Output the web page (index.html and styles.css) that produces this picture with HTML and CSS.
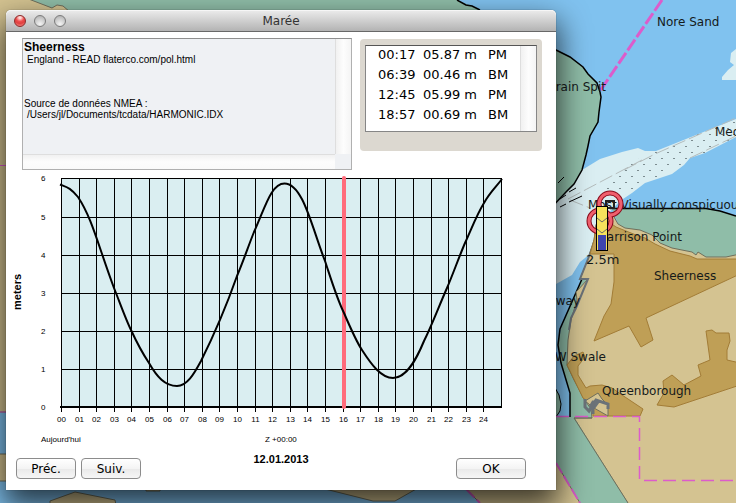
FILE: index.html
```html
<!DOCTYPE html>
<html lang="fr">
<head>
    <meta charset="UTF-8">
    <meta name="viewport" content="width=device-width, initial-scale=1.0">
    <title>Marée</title>
    <link rel="stylesheet" href="styles.css">
</head>
<body>
    <svg class="map" viewBox="0 0 736 503" preserveAspectRatio="xMinYMin slice">
        <defs>
            <pattern id="sand" width="12" height="12" patternUnits="userSpaceOnUse">
                <path d="M1 2.5h2M7 8.5h2" stroke="#7c8c90"/>
            </pattern>
        </defs>
        <rect class="water" width="736" height="503"/>

        <!-- west bank -->
        <path class="green" d="M0 0H457L480 10V60H0z"/>
        <path class="coast" d="M457 0L466 5L472 6L480 10"/>
        <path class="land edge" d="M-2 -2H26L52 8L57 5L63 6L70 12V412H-2z"/>
        <path class="land edge" d="M-2 454H10V481H-2z"/>
        <path class="limit" d="M0 165.5H8M0 412H8"/>
        <path class="land edge" d="M50 505V501L75 492L115 500L116 505z"/>
        <path class="land edge" d="M146 480H160V491H146z"/>
        <path class="land edge" d="M325 489L373 501H395L418 488z"/>

        <!-- drying banks -->
        <path class="shoal" d="M550 205L582 170L600 159L622 152L638 148L645 151H656L736 119V137L705 153L690 158L684 165L672 174L645 183L632 193L620 201L600 222L594 240L590 254L580 262L572 275L556 284H550z"/>
        <path class="shoal" d="M736 49L731 53L730 62L734 65L728 70L722 77V80H736z"/>
        <path d="M624 166L655 151L736 119V137L705 153L684 163L660 176L610 202L590 196z" fill="url(#sand)"/>
        <path class="bank" d="M568 199L642 160M624 170L655 154L736 118M570 200L590 208M690 158L736 136"/>
        <path class="green" d="M550 47L570 57L583 67L588 74L597 83L600 92L601 97L599 112L598 122L590 136L588 146L586 155L582 170L574 184L566 192L550 209z"/>
        <path class="coast" d="M550 47L570 57L583 67L588 74L597 83L600 92L601 97L599 112L598 122L590 136L588 146L586 155L582 170L574 184L566 192L550 209"/>
        <path class="hatch" d="M558 183L564 177M560 199L566 195M569 192L576 188M560 207L566 204M569 202L582 196"/>

        <!-- Sheppey -->
        <path class="green" d="M612 208.500H706L720 211L736 216V260H690L620 228z"/>
        <path class="coast" d="M610 208.500H706L720 211L736 216"/>
        <path class="green" d="M588 278H582L561 329L558 345L561 363L570 393V417H556V463L580 503H640V400L600 300z"/>
        <path class="water" d="M556 340L558 345L561 363L570 393V417H556z"/>
        <path class="coast" d="M582 279L560 329L558 345L561 363L570 393V417"/>
        <path class="green coastline" d="M554 386L559 395L561 404L560 411L556 417"/>
        <path class="land edge" d="M602 212L613 215L618 224L625 228L640 230L652 235L660 243L672 248L692 252L696 255L698 252L706 257L726 257L740 254V505H629L574 418H592L591 409L584 399L574 380L567 365L568 340L571 320L577 300L576 292L588 279H580L588 259L594 240L596 225z"/>
        <path class="green" d="M556 417H574L628 503H579L556 463z"/>
        <path class="edge" d="M592 418H574L628 503"/>
        <path class="land" d="M456 480L480 503H580L556 463z"/>
        <path class="edge" d="M466 489L480 503M556 463L580 503"/>
        <path class="limit thick" d="M466 489L480 503M556 463L580 503"/>
        <path class="shore" d="M597 225L595 240L588 259L580 279H588L583 291L576 308L571 318L569 330"/>

        <!-- built-up areas -->
        <path class="town edge" d="M598 214L609 222L616 227L636 235L645 238L655 244L670 251L690 256L697 259H740V274L646 318L653 340L641 347L629 326L594 341L600 326L604 316L611 304L614 282V254H590L594 240z"/>
        <path class="town edge" d="M567 365L574 356L583 352L585 357L578 366V375L586 388L590 386L602 385L612 388L622 395L643 409L640 416H593V405L583 398z"/>
        <path class="land edge" d="M585 401L598 393L602 399L608 405V416L594 408z"/>
        <path class="harbour" d="M585 399V407L589 411L596 400L608 404V409M590 407L593 402L598 402L593 409V414"/>
        <path class="town edge" d="M706 331L710 360L698 365L701 376L684 385L672 375L663 381L664 393L657 405L674 407L740 385V363L727 360V350L730 341L729 333H716L712 330z"/>

        <path class="limit channel" d="M662 0L600 91"/>
        <path class="limit area" d="M556 416.500H639.500V480.500H736"/>

        <g class="names">
            <text x="657" y="26">Nore Sand</text>
            <text x="606" y="91" text-anchor="end">rain Spit</text>
            <text x="715" y="136">Med</text>
            <text x="588" y="209">Most Visually conspicuou</text>
            <text x="682" y="241" text-anchor="end">Harrison Point</text>
            <text x="654" y="280">Sheerness</text>
            <text x="580" y="305" text-anchor="end">way</text>
            <text x="606" y="361" text-anchor="end">W Swale</text>
            <text x="602" y="395">Queenborough</text>
        </g>

        <!-- tide gauge -->
        <g fill="none">
            <rect x="606" y="201" width="8" height="7" stroke="#222" stroke-width="2"/>
            <circle cx="610" cy="204" r="11" stroke="#8a0c1c" stroke-width="5"/>
            <circle cx="600" cy="221" r="11" stroke="#8a0c1c" stroke-width="5"/>
            <circle cx="610" cy="204" r="11" stroke="#f0606e" stroke-width="3"/>
            <circle cx="600" cy="221" r="11" stroke="#f0606e" stroke-width="3"/>
        </g>
        <rect x="596.500" y="206.500" width="11" height="44" fill="#f6e25c" stroke="#000"/>
        <rect x="598" y="235" width="8" height="15" fill="#3f45ae"/>
        <path d="M597 218L602 222L607 218M597 229L602 233L607 229" fill="none" stroke="#6b6a66"/>
        <text class="level" x="586" y="264">2.5m</text>
    </svg>

    <div class="window">
        <div class="titlebar">
            <div class="lights">
                <button class="light close" aria-label="Fermer"></button>
                <button class="light" aria-label="Réduire"></button>
                <button class="light" aria-label="Agrandir"></button>
            </div>
            <h1>Marée</h1>
        </div>

        <div class="top">
            <div class="station">
                <div class="station-text">
                    <h2>Sheerness</h2>
                    <p class="indent">England - READ flaterco.com/pol.html</p>
                    <p class="source">Source de données NMEA :</p>
                    <p class="indent">/Users/jl/Documents/tcdata/HARMONIC.IDX</p>
                </div>
                <div class="track-v"></div>
                <div class="track-h"></div>
            </div>
            <div class="tides">
                <div class="tides-list">
                    <table>
                        <tr><td>00:17</td><td>05.87 m</td><td>PM</td></tr>
                        <tr><td>06:39</td><td>00.46 m</td><td>BM</td></tr>
                        <tr><td>12:45</td><td>05.99 m</td><td>PM</td></tr>
                        <tr><td>18:57</td><td>00.69 m</td><td>BM</td></tr>
                    </table>
                    <div class="tides-track"></div>
                </div>
            </div>
        </div>

        <svg class="chart" viewBox="6 170 550 282">
            <rect x="61" y="178" width="440" height="229" fill="#daeef1"/>
            <g id="grid" class="grid"></g>
            <path d="M60 407H502" stroke="#000" stroke-width="2"/>
            <path d="M344 178V407" stroke="#ff6b7b" stroke-width="4" stroke-linecap="round"/>
            <path class="curve" d="M60 184.500C66 187 70 187 78 197C92 218 98 245 114 288C120 303 126 320 131 330C137 343 143 354 149 363C157 377 165 386 177 386C187 386 194 374 201 361C213 337 225 310 237 276C243 262 248 247 254 232C265 208 271 183.500 284.500 183.500C303 183.500 312 228 325 261C331 279 337 299 344 313C350 327 356 341 362 350C371 364 381 378 393 378C407 378 417 358 424 341C432 325 439 306 447 288C453 274 459 257 465 243C471 230 477 214 484 203C490 192 496 187 502 179"/>
            <g id="labels" class="labels">
                <text x="41" y="442">Aujourd'hui</text>
                <text x="265" y="442">Z +00:00</text>
            </g>
            <text class="unit" transform="translate(21 310) rotate(-90)">meters</text>
        </svg>

        <div class="footer">
            <div class="nav">
                <button class="btn">Préc.</button>
                <button class="btn">Suiv.</button>
            </div>
            <span class="date">12.01.2013</span>
            <button class="btn ok">OK</button>
        </div>
    </div>

    <script>
        const grid = document.getElementById('grid');
        const labels = document.getElementById('labels');

        function addLine(d) {
            const path = document.createElementNS('http://www.w3.org/2000/svg', 'path');
            path.setAttribute('d', d);
            grid.appendChild(path);
        }

        function addLabel(x, y, value, anchor) {
            const text = document.createElementNS('http://www.w3.org/2000/svg', 'text');
            text.setAttribute('x', x);
            text.setAttribute('y', y);
            text.setAttribute('text-anchor', anchor);
            text.textContent = value;
            labels.appendChild(text);
        }

        // hours
        for (let h = 0; h <= 25; h++) {
            const x = Math.round(61 + h * 17.6) + 0.5;
            addLine(`M${x} 178V${h < 25 ? 412 : 407}`);
            if (h < 25) {
                addLabel(x, 422, String(h).padStart(2, '0'), 'middle');
            }
        }

        // meters
        for (let m = 0; m <= 6; m++) {
            const y = Math.round(407 - m * 38.1);
            addLine(`M61 ${y + 0.5}H502`);
            addLabel(41, y + 3, m, 'start');
        }
    </script>
</body>
</html>
```
FILE: styles.css
```css
* {
    box-sizing: border-box;
}
body {
    margin: 0;
    min-height: 100vh;
    overflow: hidden;
    background-color: #80c2ef;
    font-family: "Liberation Sans", Arial, sans-serif;
    color: #000;
}
h1, h2, p {
    margin: 0;
}

/* map */
.map {
    position: absolute;
    top: 0;
    left: 0;
    width: 100%;
    height: 100%;
}
.water {
    fill: #80c2ef;
}
.land {
    fill: #d4c391;
}
.green {
    fill: #8fbda8;
}
.shoal {
    fill: #daeef2;
}
.town {
    fill: #bf9f56;
}
.edge {
    stroke: #6f6f5c;
}
.town.edge {
    stroke: #a27c36;
}
path.edge:not(.land):not(.town) {
    fill: none;
}
.coast, .coastline, .hatch {
    stroke: #000;
}
.coast, .hatch {
    fill: none;
}
.coast {
    stroke-width: 1.5;
}
.bank {
    fill: none;
    stroke: #b4bcbc;
    stroke-dasharray: 14 4;
}
.shore {
    fill: none;
    stroke: #6b7278;
    stroke-width: 2;
}
.harbour {
    fill: none;
    stroke: #6b7278;
    stroke-width: 3;
}
.limit {
    fill: none;
    stroke: #dc5ccb;
}
.thick {
    stroke-width: 2;
    stroke-dasharray: 12 3;
}
.channel {
    stroke-width: 3;
    stroke-dasharray: 13 3;
}
.area {
    stroke-width: 1.5;
    stroke-dasharray: 13 6;
}
.names {
    font: 12px "DejaVu Sans", Verdana, sans-serif;
    fill: #151a1a;
}
.level {
    font: 13px "DejaVu Sans", Verdana, sans-serif;
    fill: #151a1a;
}

/* window */
.window {
    position: absolute;
    top: 10px;
    left: 6px;
    right: 180px;
    background-color: #fff;
    border-radius: 5px 5px 0 0;
    box-shadow: 0 0 1px rgba(0, 0, 0, 0.7), 0 14px 30px 3px rgba(0, 0, 0, 0.7);
}
.titlebar {
    display: grid;
    grid-template-columns: 1fr auto 1fr;
    align-items: center;
    height: 22px;
    padding: 0 8px;
    border-bottom: 1px solid #686868;
    border-radius: 5px 5px 0 0;
    background: linear-gradient(#ececec, #b3b3b3);
    box-shadow: inset 0 1px 0 #f6f6f6;
}
.titlebar h1 {
    font: 12px "DejaVu Sans", Verdana, sans-serif;
    color: #333;
}
.lights {
    display: flex;
    gap: 8px;
}
.light {
    width: 12px;
    height: 12px;
    padding: 0;
    border: 1px solid #7b7b7b;
    border-radius: 50%;
    background: radial-gradient(circle at 50% 80%, #f4f4f4, #b9b9b9 80%);
}
.light.close {
    border-color: #8c2a2a;
    background: radial-gradient(circle at 50% 15%, #ffd9d6 10%, #ee4f50 40%, #e04040 60%, #ff9a94);
}
.top {
    display: flex;
    align-items: flex-start;
    gap: 8px;
    padding: 6px 14px 0 16px;
}
.station {
    flex: 1;
    display: grid;
    grid-template-columns: 1fr 16px;
    grid-template-rows: 1fr 15px;
    min-height: 132px;
    border: 1px solid #b0b0b0;
    border-top-color: #8f8f8f;
    background-color: #eff1f4;
}
.station-text {
    padding: 1px;
    font-size: 10px;
    line-height: 11px;
}
.station-text h2 {
    font-size: 12px;
    line-height: 14px;
}
.station-text .indent {
    padding-left: 3px;
}
.station-text .source {
    margin-top: 33px;
}
.track-v, .tides-track {
    border-left: 1px solid #dedede;
    background: linear-gradient(90deg, #f1f1f1, #fdfdfd 50%, #f4f4f4);
}
.track-h {
    border-top: 1px solid #dedede;
    background: linear-gradient(#f1f1f1, #fdfdfd 50%, #fafafa);
}
.tides {
    width: 182px;
    margin-top: 1px;
    padding: 6px 5px 19px;
    border-radius: 4px;
    background-color: #dcd8d0;
}
.tides-list {
    display: grid;
    grid-template-columns: 1fr 16px;
    min-height: 87px;
    border: 1px solid #868686;
    border-top-color: #555;
    background-color: #fff;
}
.tides table {
    align-self: start;
    justify-self: start;
    margin-left: 12px;
    border-collapse: collapse;
    font: 13px "DejaVu Sans", Verdana, sans-serif;
    line-height: 18px;
}
.tides td {
    height: 20px;
    padding: 0 0 2px;
    white-space: nowrap;
}
.tides td:nth-child(1) {
    width: 45px;
}
.tides td:nth-child(2) {
    width: 65px;
}
.chart {
    display: block;
    width: 100%;
    height: auto;
}
.grid {
    stroke: #000;
}
.curve {
    fill: none;
    stroke: #000;
    stroke-width: 2;
}
.labels {
    font-size: 8px;
}
.unit {
    font-size: 11px;
    font-weight: bold;
}
.footer {
    display: grid;
    grid-template-columns: 1fr auto 1fr;
    align-items: start;
    padding: 0 10px 11px;
}
.nav {
    display: flex;
    gap: 5px;
}
.date {
    font-size: 11px;
    font-weight: bold;
    line-height: 14px;
}
.btn {
    width: 60px;
    height: 21px;
    margin: 6px 0 0;
    padding: 0;
    border: 1px solid #8c8c8c;
    border-radius: 4px;
    background: linear-gradient(#fff, #f4f4f4 50%, #e9e9e9 51%, #f6f6f6);
    font: 12px "DejaVu Sans", Verdana, sans-serif;
    color: #000;
}
.btn:active {
    background: #d5d5d5;
}
.ok {
    width: 70px;
    margin-right: 20px;
    justify-self: end;
}
```
